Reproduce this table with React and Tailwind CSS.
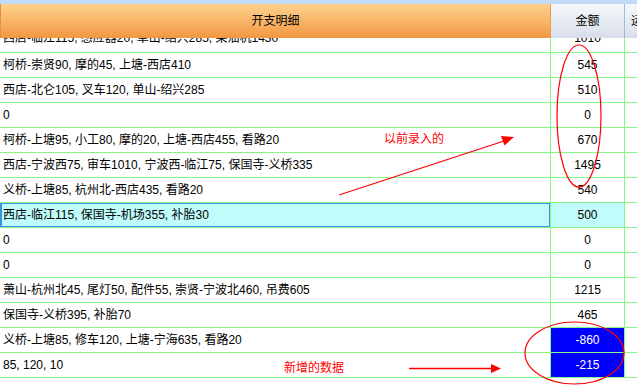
import React from 'react'

const rows = [
  { text: '西店-临江115, 感应器20, 单山-绍兴285, 柴油机1430', amount: '1010', partial: true },
  { text: '柯桥-崇贤90, 摩的45, 上塘-西店410', amount: '545' },
  { text: '西店-北仑105, 叉车120, 单山-绍兴285', amount: '510' },
  { text: '0', amount: '0' },
  { text: '柯桥-上塘95, 小工80, 摩的20, 上塘-西店455, 看路20', amount: '670' },
  { text: '西店-宁波西75, 审车1010, 宁波西-临江75, 保国寺-义桥335', amount: '1495' },
  { text: '义桥-上塘85, 杭州北-西店435, 看路20', amount: '540' },
  { text: '西店-临江115, 保国寺-机场355, 补胎30', amount: '500', current: true },
  { text: '0', amount: '0' },
  { text: '0', amount: '0' },
  { text: '萧山-杭州北45, 尾灯50, 配件55, 崇贤-宁波北460, 吊费605', amount: '1215' },
  { text: '保国寺-义桥395, 补胎70', amount: '465' },
  { text: '义桥-上塘85, 修车120, 上塘-宁海635, 看路20', amount: '-860', added: true },
  { text: '85, 120, 10', amount: '-215', added: true },
]

function Row({ r }) {
  return (
    <div className="flex h-[25px] border-b border-[#84f884]">
      <div
        className={`flex w-[550px] shrink-0 items-center pl-[3px] ${r.partial ? 'pb-[4px]' : ''} ${
          r.current ? 'bg-[#c0fcfc] shadow-[inset_0_0_0_1px_#3c92e4,inset_1px_0_0_1px_#3c92e4]' : ''
        }`}
      >
        {r.text}
      </div>
      <div
        className={`flex w-[75px] shrink-0 items-center justify-center border-x border-[#84f884] ${r.partial ? 'pb-[4px]' : ''} ${
          r.current ? 'bg-[#c0fcfc]' : ''
        } ${r.added ? 'bg-[#0000ff] text-white' : ''}`}
      >
        {r.amount}
      </div>
      <div className="flex-1" />
    </div>
  )
}

export default function App() {
  return (
    <div className="relative flex h-[385px] w-[637px] flex-col overflow-hidden bg-white font-['Liberation_Sans','Noto_Sans_CJK_SC',sans-serif] text-[12px] text-black">
      <div className="h-[4px] shrink-0 bg-[#c2d9f7]" />

      <div className="flex h-[34px] shrink-0">
        <div className="flex w-[550px] shrink-0 items-center justify-center border-l border-[#ec8f36] bg-gradient-to-b from-[#fed28d] to-[#f1973f]">
          开支明细
        </div>
        <div className="flex w-[75px] shrink-0 items-center justify-center border-x border-l-[#e79a50] border-r-[#a5bcd7] bg-gradient-to-b from-[#f6f8fb] to-[#d7deea]">
          金额
        </div>
        <div className="flex flex-1 items-center overflow-hidden whitespace-nowrap bg-gradient-to-b from-[#f6f8fb] to-[#d7deea] pl-[6px]">
          运费
        </div>
      </div>

      <div className="flex-1 overflow-hidden">
        <div className="-mt-[10px]">
          {rows.map((r, i) => (
            <Row key={i} r={r} />
          ))}
        </div>
      </div>

      <span className="absolute left-[384px] top-[130px] text-[#ff0000]">以前录入的</span>
      <span className="absolute left-[284px] top-[359px] text-[#ff0000]">新增的数据</span>

      <svg className="pointer-events-none absolute left-0 top-0" width="637" height="385" viewBox="0 0 637 385">
        <ellipse cx="579" cy="116" rx="22" ry="71" fill="none" stroke="#ff0000" strokeWidth="1.2" />
        <ellipse cx="574.5" cy="353" rx="49.5" ry="31" fill="none" stroke="#ff0000" strokeWidth="1.2" />
        <line x1="339" y1="195" x2="504" y2="141" stroke="#ff0000" strokeWidth="1.3" />
        <polygon points="514,137 504.5,145.5 501,136" fill="#ff0000" />
        <line x1="409" y1="368.5" x2="492" y2="368.5" stroke="#ff0000" strokeWidth="1.3" />
        <polygon points="501,368.5 491,364 491,373" fill="#ff0000" />
      </svg>
    </div>
  )
}
